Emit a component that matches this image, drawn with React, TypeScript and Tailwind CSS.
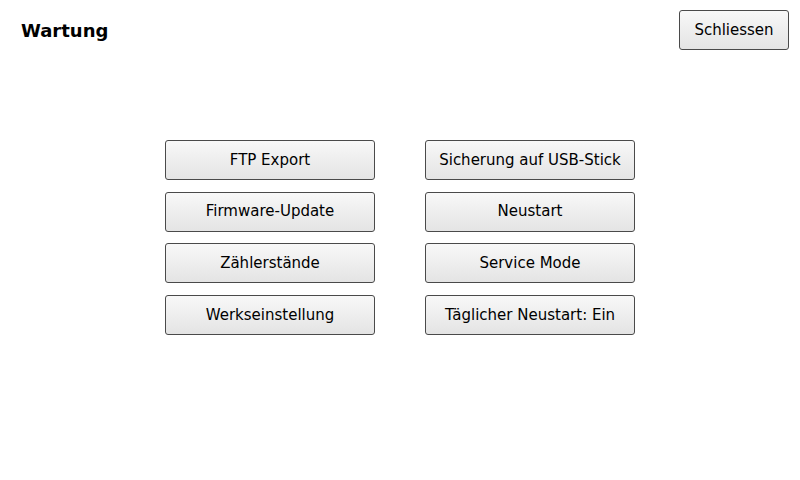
const left = ["FTP Export", "Firmware-Update", "Zählerstände", "Werkseinstellung"];
const right = ["Sicherung auf USB-Stick", "Neustart", "Service Mode", "Täglicher Neustart: Ein"];

function Btn({ label, className = "" }: { label: string; className?: string }) {
  return (
    <button
      type="button"
      className={
        "h-10 rounded-[3px] border border-[#4a4a4a] bg-gradient-to-b from-[#f8f8f8] to-[#e4e4e4] text-[15px] text-black " +
        className
      }
    >
      {label}
    </button>
  );
}

export default function App() {
  return (
    <div
      className="w-[800px] h-[480px] bg-white relative"
      style={{ fontFamily: '"DejaVu Sans", Verdana, sans-serif' }}
    >
      <div className="flex items-start justify-between pl-[21px] pr-[11px] pt-[10px]">
        <h1 className="mt-[12px] text-[18px] font-bold leading-none text-black">Wartung</h1>
        <Btn label="Schliessen" className="w-[110px]" />
      </div>
      <div className="mt-[90px] flex justify-center gap-[50px]">
        <div className="flex flex-col gap-[11.67px]">
          {left.map((l) => (
            <Btn key={l} label={l} className="w-[210px]" />
          ))}
        </div>
        <div className="flex flex-col gap-[11.67px]">
          {right.map((l) => (
            <Btn key={l} label={l} className="w-[210px]" />
          ))}
        </div>
      </div>
    </div>
  );
}
